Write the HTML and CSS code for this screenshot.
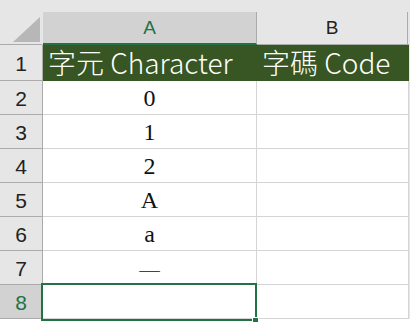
FILE: index.html
```html
<html>
	<head>
		<link rel="stylesheet" href="styles.css">
	</head>
	<body>
		<div class="sheet">
			<div class="corner">
				<svg class="corner-mark" width="27" height="25" viewBox="0 0 27 25"><polygon points="27,0 27,25 0,25" fill="#b7b7b7"/></svg>
			</div>
			<div class="col-head selected"><span>A</span></div>
			<div class="col-head"><span>B</span></div>
			<div class="col-rest"></div>

			<div class="row-head">1</div>
			<div class="cell title">字元 Character</div>
			<div class="cell title">字碼 Code</div>
			<div class="col-rest"></div>

			<div class="row-head">2</div>
			<div class="cell value">0</div>
			<div class="cell"></div>
			<div class="col-rest"></div>

			<div class="row-head">3</div>
			<div class="cell value">1</div>
			<div class="cell"></div>
			<div class="col-rest"></div>

			<div class="row-head">4</div>
			<div class="cell value">2</div>
			<div class="cell"></div>
			<div class="col-rest"></div>

			<div class="row-head">5</div>
			<div class="cell value">A</div>
			<div class="cell"></div>
			<div class="col-rest"></div>

			<div class="row-head">6</div>
			<div class="cell value">a</div>
			<div class="cell"></div>
			<div class="col-rest"></div>

			<div class="row-head">7</div>
			<div class="cell value cjk">一</div>
			<div class="cell"></div>
			<div class="col-rest"></div>

			<div class="row-head selected">8</div>
			<div class="cell active">
				<div class="selection"><div class="handle"></div></div>
			</div>
			<div class="cell"></div>
			<div class="col-rest"></div>
		</div>
	</body>
</html>
```

FILE: styles.css
```css
* {
	box-sizing: border-box;
}
body {
	margin: 0;
	background-color: #fff;
	font-family: "Liberation Sans", Arial, sans-serif;
	overflow: hidden;
}

.sheet {
	display: grid;
	grid-template-columns: 43px 214px 152px 1fr;
	grid-template-rows: 45px 36px repeat(7, 34px);
}

/* headers */
.corner {
	position: relative;
	background-color: #e6e6e6;
	border-right: solid 1px #e6e6e6;
	border-bottom: solid 1px #ababab;
}
.corner-mark {
	position: absolute;
	left: 13px;
	top: 17px;
}
.col-head {
	display: flex;
	align-items: flex-end;
	background-color: #e6e6e6;
	border-bottom: solid 1px #ababab;
}
.col-head span {
	display: flex;
	align-items: center;
	justify-content: center;
	width: 100%;
	height: 32px;
	border-left: solid 1px #ababab;
	border-right: solid 1px #ababab;
	margin-left: -1px;
	font-size: 19px;
	color: #222;
}
.col-head.selected {
	border-bottom: solid 2px #217346;
}
.col-head.selected span {
	background-color: #d2d2d2;
	height: 31px;
	color: #217346;
	border-left: none;
	margin-left: 0;
}
.col-rest {
	background-color: #e6e6e6;
}
.row-head {
	display: flex;
	align-items: center;
	justify-content: center;
	background-color: #e6e6e6;
	border-right: solid 1px #ababab;
	border-bottom: solid 1px #ababab;
	font-size: 21px;
	color: #222;
	padding-top: 2px;
}
.row-head.selected {
	background-color: #d2d2d2;
	color: #217346;
}

/* cells */
.cell {
	border-right: solid 1px #d4d4d4;
	border-bottom: solid 1px #d4d4d4;
	background-color: #fff;
}
.cell.title {
	display: flex;
	align-items: center;
	background-color: #375623;
	border-color: #375623;
	color: #fff;
	font-family: "Noto Sans CJK TC", sans-serif;
	font-weight: 300;
	font-size: 28px;
	line-height: 34px;
	padding: 0 0 2px 5px;
	white-space: nowrap;
}
.cell.value {
	display: flex;
	align-items: flex-end;
	justify-content: center;
	font-family: "Liberation Serif", "Times New Roman", serif;
	font-size: 24px;
	line-height: 1;
	padding-bottom: 4px;
	color: #111;
}
.cell.cjk {
	font-family: "Noto Sans CJK TC", sans-serif;
	font-weight: 100;
	font-size: 23px;
	padding-bottom: 2px;
}

/* active cell */
.cell.active {
	position: relative;
}
.selection {
	position: absolute;
	left: -2px;
	top: -2px;
	width: 216px;
	height: 38px;
	border: solid 2px #217346;
}
.handle {
	position: absolute;
	right: -4px;
	bottom: -5px;
	width: 7px;
	height: 7px;
	background-color: #217346;
	border: solid 1px #fff;
}
```
